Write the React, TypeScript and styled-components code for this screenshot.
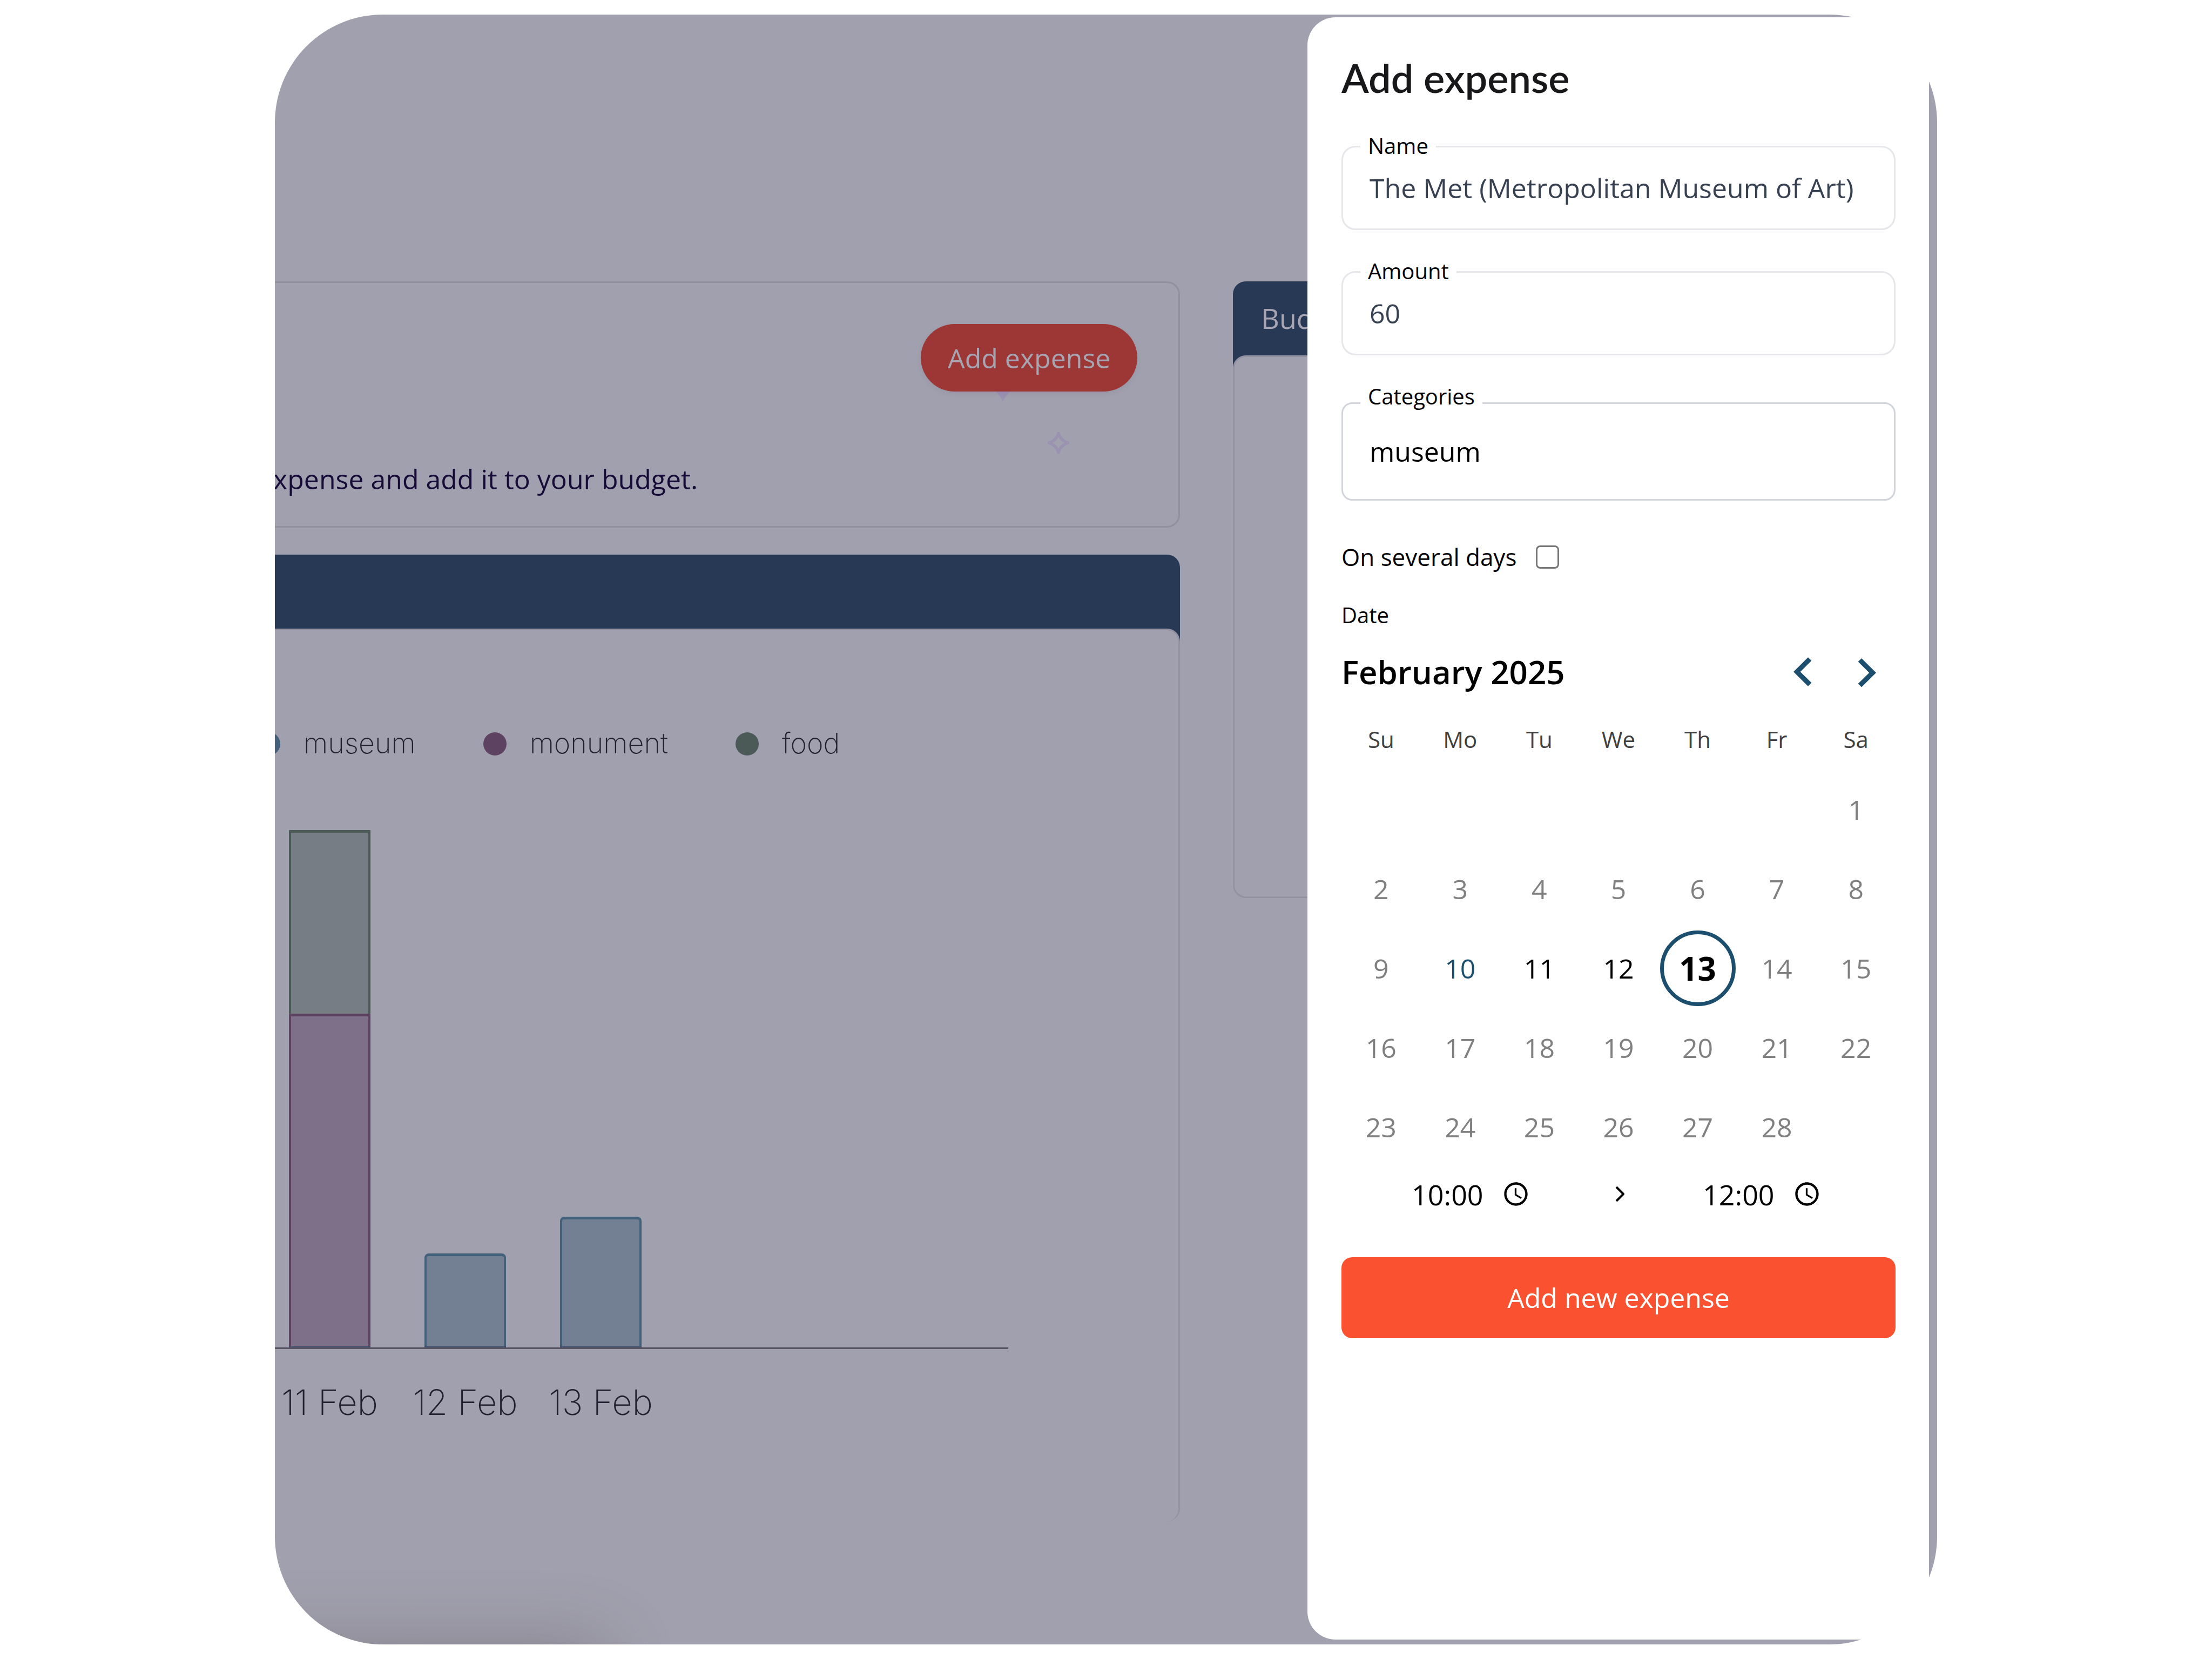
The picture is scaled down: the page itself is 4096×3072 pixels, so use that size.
import React, { useState } from "react";
import styled, { createGlobalStyle, css } from "styled-components";

const color = {
  veil: "#a1a0ae",
  veilLine: "#918fa0",
  veilText: "#a8a5b3",
  navy: "#283956",
  ink: "#170c38",
  ocean: "#1c4e6e",
  coral: "#fa5230",
  coralDim: "#9d3735",
  sparkle: "#9b92b1",
};

const sans = `"Open Sans", "Noto Sans", sans-serif`;

const GlobalStyle = createGlobalStyle`
  *, *::before, *::after { box-sizing: border-box; }
  body { margin: 0; background: #fff; color: #000; font-family: ${sans}; font-size: 50px; }
  button, input, select { font: inherit; color: inherit; margin: 0; }
  button { cursor: pointer; }
  h1, h2, p { margin: 0; }
`;

const Page = styled.div`
  display: flex;
  min-height: 100vh;
  padding: 27px 509px;
`;

const Stage = styled.div`
  position: relative;
  display: flex;
  flex: 1;
  min-width: 0;
`;

const Backdrop = styled.div`
  position: relative;
  flex: 1;
  min-width: 0;
  overflow: hidden;
  border-radius: 200px;
  background: ${color.veil};
`;

/* Dashboard behind the drawer */

const Dashboard = styled.main`
  display: grid;
  grid-template-columns: 22fr 13fr;
  align-items: start;
  gap: 98px;
  margin-left: -100px;
  padding: 494px 254px 0 0;
`;

const Column = styled.div`
  display: flex;
  flex-direction: column;
  gap: 50px;
  min-width: 0;
`;

const IntroCard = styled.section`
  position: relative;
  display: flex;
  flex-direction: column;
  gap: 126px;
  padding: 76px 76px 51px 66px;
  border: 3px solid ${color.veilLine};
  border-radius: 24px;
`;

const Sparkles = styled.svg`
  position: absolute;
  right: 200px;
  top: 180px;
  width: 150px;
  height: 150px;
  overflow: visible;
`;

const PillButton = styled.button`
  position: relative;
  align-self: flex-end;
  height: 125px;
  padding: 0 50px;
  border: 0;
  border-radius: 63px;
  background: ${color.coralDim};
  color: ${color.veilText};
  box-shadow: 0 4px 10px rgba(60, 55, 80, 0.08);
`;

const IntroText = styled.p`
  line-height: 72px;
  color: ${color.ink};
  white-space: nowrap;
`;

const PanelHead = styled.header`
  height: 161px;
  padding: 32px 52px;
  border-radius: 24px 24px 0 0;
  background: ${color.navy};
  color: ${color.veilText};
`;

const PanelTitle = styled.h2`
  font-size: 52px;
  font-weight: 500;
  line-height: 72px;
  white-space: nowrap;
`;

const PanelBody = styled.div<{ $open?: boolean }>`
  position: relative;
  margin-top: -24px;
  border: 3px solid #9392a3;
  border-bottom-width: ${(p) => (p.$open ? 0 : "3px")};
  border-radius: 24px;
  background: ${color.veil};
`;

const BudgetBody = styled(PanelBody)`
  height: 1005px;
`;

const ChartBody = styled(PanelBody)`
  display: flex;
  flex-direction: column;
  gap: 124px;
  padding: 174px 315px 178px 0;
`;

const Legend = styled.ul`
  display: flex;
  gap: 125px;
  margin: 0;
  padding: 0 0 0 64px;
  list-style: none;
  font-family: Inter, sans-serif;
  font-size: 52px;
  font-weight: 200;
  line-height: 72px;
  color: #221f30;
`;

const LegendItem = styled.li`
  display: flex;
  align-items: center;
  gap: 43px;
`;

const Dot = styled.span<{ $tone: Tone }>`
  width: 43px;
  height: 43px;
  border-radius: 50%;
  background: ${(p) => tones[p.$tone].line};
`;

const Plot = styled.div`
  display: flex;
  flex-direction: column;
`;

const Bars = styled.div`
  display: flex;
  align-items: flex-end;
  gap: 100px;
  padding-left: 123px;
  border-bottom: 3px solid #575362;
`;

const Stack = styled.div`
  display: flex;
  flex-direction: column;
  width: 151px;
  border-bottom: 2px solid #44526f;
`;

const Segment = styled.div<{ $tone: Tone }>`
  border: 4px solid ${(p) => tones[p.$tone].line};
  border-top-width: 5px;
  border-bottom: 0;
  background: ${(p) => tones[p.$tone].fill};
  border-radius: ${(p) => (p.$tone === "museum" ? "8px 8px 0 0" : "2px 2px 0 0")};
`;

const Ticks = styled.div`
  display: flex;
  gap: 100px;
  padding: 57px 0 0 123px;
  font-family: Inter, sans-serif;
  font-size: 65px;
  font-weight: 200;
  line-height: 84px;
  color: #221f30;
`;

const Tick = styled.span`
  display: flex;
  justify-content: center;
  width: 151px;
  white-space: nowrap;
`;

const FloorShadow = styled.div`
  position: absolute;
  left: -200px;
  bottom: -160px;
  width: 800px;
  height: 150px;
  box-shadow: 0 0 130px 10px rgba(70, 60, 60, 0.3);
`;

/* Drawer */

const Drawer = styled.aside`
  position: absolute;
  top: 5px;
  right: 15px;
  bottom: 9px;
  width: 1151px;
  padding: 68px 62px 60px 63px;
  border-radius: 52px;
  background: #fff;
`;

const DrawerTitle = styled.h1`
  margin-bottom: 82px;
  font-family: Lato, sans-serif;
  font-size: 74px;
  font-weight: 600;
  line-height: 88px;
  color: #18181b;
`;

const Form = styled.form`
  display: flex;
  flex-direction: column;
`;

const Field = styled.div`
  position: relative;
  margin-bottom: 76px;
`;

const FieldLabel = styled.label`
  position: absolute;
  left: 35px;
  top: -20px;
  padding: 0 14px;
  background: #fff;
  font-size: 40px;
  line-height: 40px;
`;

const control = css`
  display: block;
  width: 100%;
  padding: 0 49px;
  background: #fff;
  outline: none;
  appearance: none;
`;

const TextInput = styled.input`
  ${control}
  height: 156px;
  border: 3px solid #e5e7eb;
  border-radius: 26px;
  color: #374151;
`;

const Select = styled.select`
  ${control}
  height: 182px;
  margin-top: 11px;
  border: 3px solid #d1d5db;
  border-radius: 20px;
`;

const CheckRow = styled.label`
  display: flex;
  align-items: center;
  gap: 36px;
  margin-bottom: 52px;
  font-size: 44px;
  line-height: 56px;
`;

const CheckBox = styled.input`
  width: 43px;
  height: 43px;
  border: 3px solid #767676;
  border-radius: 8px;
  background: #fff;
  appearance: none;
  &:checked { background: ${color.ocean}; }
`;

const SmallLabel = styled.p`
  margin-bottom: 20px;
  font-size: 40px;
  line-height: 56px;
`;

const MonthBar = styled.div`
  display: flex;
  align-items: center;
  justify-content: space-between;
  height: 113px;
  margin-bottom: 12px;
`;

const MonthName = styled.h2`
  font-size: 60px;
  font-weight: 600;
  line-height: 76px;
`;

const MonthNav = styled.div`
  display: flex;
`;

const NavButton = styled.button`
  width: 113px;
  height: 113px;
  padding: 0;
  border: 0;
  background: none;
  svg { display: block; margin: auto; width: 80px; height: 80px; fill: ${color.ocean}; }
`;

const Calendar = styled.table`
  width: 100%;
  table-layout: fixed;
  border-collapse: collapse;
`;

const WeekDay = styled.th`
  height: 113px;
  padding: 0;
  font-size: 42px;
  font-weight: 500;
  color: #404040;
`;

const DayCell = styled.td`
  height: 147px;
  padding: 0;
`;

type DayState = "muted" | "today" | "open" | "picked";

const dayLook = {
  muted: css`color: #808080;`,
  today: css`color: ${color.ocean};`,
  open: css`color: #000;`,
  picked: css`
    border-color: ${color.ocean};
    font-size: 60px;
    font-weight: 700;
  `,
};

const Day = styled.button<{ $state: DayState }>`
  display: block;
  width: 140px;
  height: 140px;
  margin: 0 auto;
  padding: 0;
  border: 7px solid transparent;
  border-radius: 50%;
  background: none;
  ${(p) => dayLook[p.$state]}
`;

const TimeRow = styled.div`
  display: flex;
  align-items: center;
  justify-content: space-between;
  height: 72px;
  margin: 15px 0 81px;
  padding: 0 138px 0 130px;
`;

const TimeField = styled.label`
  display: flex;
  align-items: center;
  gap: 17px;
  svg { width: 52px; height: 52px; }
`;

const TimeInput = styled.input`
  width: 150px;
  height: 72px;
  padding: 0;
  border: 0;
  outline: none;
  background: none;
  font-size: 52px;
`;

const Until = styled.svg`
  width: 48px;
  height: 48px;
`;

const SubmitButton = styled.button`
  height: 150px;
  border: 0;
  border-radius: 20px;
  background: ${color.coral};
  color: #fff;
`;

/* Data */

type Tone = "museum" | "monument" | "food";

const tones: Record<Tone, { line: string; fill: string }> = {
  museum: { line: "#44617b", fill: "#738093" },
  monument: { line: "#5d4361", fill: "#7f7089" },
  food: { line: "#4b5a57", fill: "#767d84" },
};

const UNIT = 4;

const spending: { day: string; parts: { tone: Tone; amount: number }[] }[] = [
  { day: "11 Feb", parts: [{ tone: "food", amount: 85 }, { tone: "monument", amount: 154 }] },
  { day: "12 Feb", parts: [{ tone: "museum", amount: 43 }] },
  { day: "13 Feb", parts: [{ tone: "museum", amount: 60 }] },
];

const weekDays = ["Su", "Mo", "Tu", "We", "Th", "Fr", "Sa"];
const weeks = [0, 1, 2, 3, 4].map((w) =>
  weekDays.map((_, d) => {
    const n = w * 7 + d - 5;
    return n >= 1 && n <= 28 ? n : null;
  })
);

const stateOf = (day: number, picked: number): DayState => {
  if (day === picked) return "picked";
  if (day === 10) return "today";
  if (day > 10 && day < 14) return "open";
  return "muted";
};

const Clock = () => (
  <svg viewBox="0 0 24 24" aria-hidden="true">
    <path d="M11.99 2C6.47 2 2 6.48 2 12s4.47 10 9.99 10C17.52 22 22 17.52 22 12S17.52 2 11.99 2zM12 20c-4.42 0-8-3.58-8-8s3.58-8 8-8 8 3.58 8 8-3.58 8-8 8zm.5-13H11v6l5.25 3.15.75-1.23-4.5-2.67z" />
  </svg>
);

const SpendingChart = () => (
  <ChartBody $open>
    <Legend>
      {(Object.keys(tones) as Tone[]).map((t) => (
        <LegendItem key={t}>
          <Dot $tone={t} />
          {t}
        </LegendItem>
      ))}
    </Legend>
    <Plot>
      <Bars>
        {spending.map((s) => (
          <Stack key={s.day}>
            {s.parts.map((p) => (
              <Segment key={p.tone} $tone={p.tone} style={{ height: p.amount * UNIT }} />
            ))}
          </Stack>
        ))}
      </Bars>
      <Ticks>
        {spending.map((s) => (
          <Tick key={s.day}>{s.day}</Tick>
        ))}
      </Ticks>
    </Plot>
  </ChartBody>
);

const ExpenseForm = () => {
  const [picked, setPicked] = useState(13);
  return (
    <Form onSubmit={(e) => e.preventDefault()}>
      <Field>
        <TextInput id="name" defaultValue="The Met (Metropolitan Museum of Art)" />
        <FieldLabel htmlFor="name">Name</FieldLabel>
      </Field>
      <Field>
        <TextInput id="amount" inputMode="decimal" defaultValue="60" />
        <FieldLabel htmlFor="amount">Amount</FieldLabel>
      </Field>
      <Field>
        <Select id="categories" defaultValue="museum">
          <option>museum</option>
          <option>monument</option>
          <option>food</option>
        </Select>
        <FieldLabel htmlFor="categories">Categories</FieldLabel>
      </Field>
      <CheckRow>
        On several days
        <CheckBox type="checkbox" />
      </CheckRow>
      <SmallLabel>Date</SmallLabel>
      <MonthBar>
        <MonthName>February 2025</MonthName>
        <MonthNav>
          <NavButton type="button" aria-label="Previous month">
            <svg viewBox="0 0 24 24">
              <polygon points="16 18.112 9.81 12 16 5.877 14.091 4 6 12 14.091 20" />
            </svg>
          </NavButton>
          <NavButton type="button" aria-label="Next month">
            <svg viewBox="0 0 24 24">
              <polygon points="8 18.612 14.189 12.5 8 6.377 9.917 4.5 18 12.5 9.917 20.5" />
            </svg>
          </NavButton>
        </MonthNav>
      </MonthBar>
      <Calendar>
        <thead>
          <tr>
            {weekDays.map((d) => (
              <WeekDay key={d} scope="col">{d}</WeekDay>
            ))}
          </tr>
        </thead>
        <tbody>
          {weeks.map((week, w) => (
            <tr key={w}>
              {week.map((day, d) => (
                <DayCell key={d}>
                  {day && (
                    <Day type="button" $state={stateOf(day, picked)} onClick={() => setPicked(day)}>
                      {day}
                    </Day>
                  )}
                </DayCell>
              ))}
            </tr>
          ))}
        </tbody>
      </Calendar>
      <TimeRow>
        <TimeField>
          <TimeInput aria-label="Start time" defaultValue="10:00" />
          <Clock />
        </TimeField>
        <Until viewBox="0 0 48 48" aria-hidden="true">
          <path d="M24 11 L37 24 L24 37" fill="none" stroke="#000" strokeWidth="4" strokeLinejoin="round" />
        </Until>
        <TimeField>
          <TimeInput aria-label="End time" defaultValue="12:00" />
          <Clock />
        </TimeField>
      </TimeRow>
      <SubmitButton type="submit">Add new expense</SubmitButton>
    </Form>
  );
};

export default function App() {
  return (
    <>
      <GlobalStyle />
      <Page>
        <Stage>
          <Backdrop>
            <Dashboard>
              <Column>
                <IntroCard>
                  <Sparkles viewBox="0 0 150 150" aria-hidden="true">
                    <path d="M25 39 Q33 22 56 8 Q33 -6 25 -23 Q17 -6 -6 8 Q17 22 25 39Z" fill={color.sparkle} />
                    <path
                      d="M128 98 Q132 112 146 116 Q132 120 128 134 Q124 120 110 116 Q124 112 128 98Z"
                      fill="none"
                      stroke={color.sparkle}
                      strokeWidth="5"
                      strokeLinejoin="round"
                    />
                  </Sparkles>
                  <PillButton type="button">Add expense</PillButton>
                  <IntroText>expense and add it to your budget.</IntroText>
                </IntroCard>
                <section>
                  <PanelHead />
                  <SpendingChart />
                </section>
              </Column>
              <section>
                <PanelHead>
                  <PanelTitle>Budget</PanelTitle>
                </PanelHead>
                <BudgetBody />
              </section>
            </Dashboard>
            <FloorShadow />
          </Backdrop>
          <Drawer>
            <DrawerTitle>Add expense</DrawerTitle>
            <ExpenseForm />
          </Drawer>
        </Stage>
      </Page>
    </>
  );
}
